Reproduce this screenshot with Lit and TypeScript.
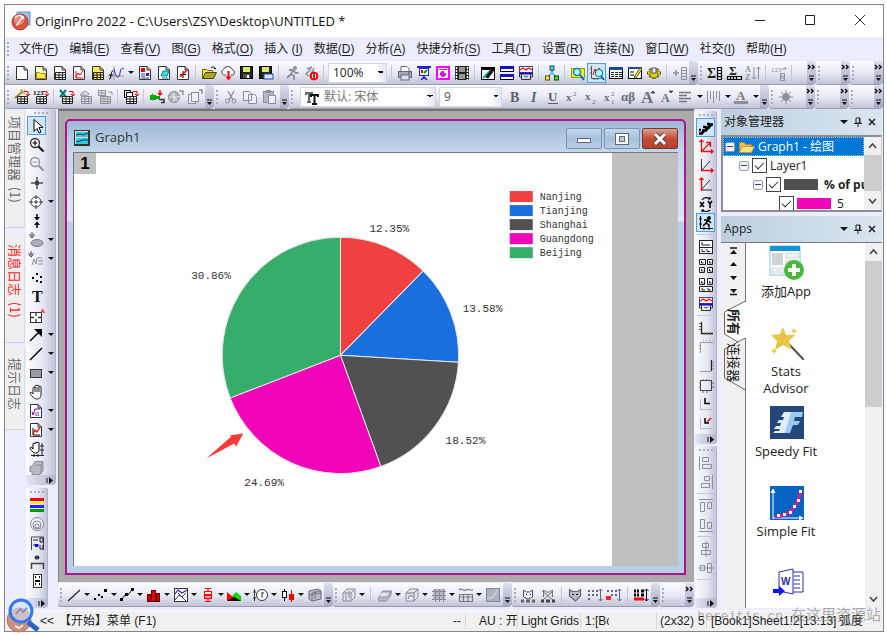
import { LitElement, html, svg, css, nothing } from "lit";
import { customElement, property } from "lit/decorators.js";
import { classMap } from "lit/directives/class-map.js";

/* ---------- icon drawing helpers (16 x 16 grid) ---------- */
const r = (x: number, y: number, w: number, h: number, f = "#000", s = "none") =>
  svg`<rect x=${x} y=${y} width=${w} height=${h} fill=${f} stroke=${s}></rect>`;
const p = (d: string, s = "#000", w = 1, f = "none") =>
  svg`<path d=${d} stroke=${s} stroke-width=${w} fill=${f}></path>`;
const c = (x: number, y: number, q: number, f = "none", s = "#000", w = 1) =>
  svg`<circle cx=${x} cy=${y} r=${q} fill=${f} stroke=${s} stroke-width=${w}></circle>`;
const t = (s: string, x: number, y: number, size: number, f = "#6d6f7c", extra = "") =>
  svg`<text x=${x} y=${y} font-size=${size} fill=${f} class=${"gl " + extra}>${s}</text>`;

const sheet = (f = "#fff") => p("M2.5 1.5h7.5l3.5 3.5v9.5h-11zM10 1.5v3.5h3.5", "#333", 1, f);
const table = (f: string, s = "#222") =>
  p("M3.5 7.5h10v7h-10zM3.5 10h10M3.5 12.500h10M7 7.500v7M10.500 7.500v7", s, 1, f);
const axes = (s = "#000") => p("M3.5 2v11.5H15", s);
const redArrow = p("M10 2.500h4v4M12 5l2 2 2-2", "#e00", 1);
const G = "#8b8e9b";
const K = "#000";
const R = "#f00";

const icons: Record<string, unknown> = {
  new: sheet(),
  folder: [sheet("#ffc"), p("M3.500 13.500v-6h3l1 1h5v5z", "#a80", 1, "#ffe94d")],
  book: [sheet(), table("#fff")],
  graph: [sheet(), p("M5 6v7h7", R), p("M5 12l2-4 2 2 3-4", R)],
  matrix: [sheet("#ffe94d"), table("#ffe94d")],
  func: [p("M0 11h16M6 1v14", "#999"), p("M6 4c2 10 5 10 6 4s2-5 4-4", "#22d"), p("M1 14c3 1 1-8 4-8M1 10h4", K)],
  report: [sheet(), r(4, 3, 4, 4, R), r(9, 8, 3, 3, "#22d"), p("M4 9h4M4 11h4M4 13h8", "#24a")],
  layout: [sheet(), p("M5 11l2-5h6l-2 5z", "#088", 1, "#4dd"), p("M6 13h6", "#088")],
  notes: [sheet(), p("M8 6v7M5 9.500h6", K), p("M5 12l7-7", R, 1.5)],
  open: [p("M1.500 13.500v-9h4l1 1h5v2", "#660", 1, "#ffe94d"), p("M1.500 13.500l3-6h11l-3 6z", "#440", 1, "#aa2"), p("M10 3c2-2 4-1 4 1l-1-1m1 1l1-1", K)],
  cloud: [p("M6 10H3.500a3 3 0 010-5.500 4.500 4.500 0 018.500 0 3 3 0 011 5.500H11", "#444", 1, "#fff"), p("M8.500 6v7", R, 2), p("M5.500 11.500h6l-3 4z", R, 0, R)],
  save: [r(1.5, 1.5, 12, 12, "#222", K), r(4, 2, 7, 5, "#dde86a"), r(4, 9, 7, 4, "#555"), r(8, 10, 2, 3, "#fff")],
  saveas: [r(1.5, 1.5, 12, 12, "#222", K), r(4, 2, 7, 5, "#dde86a"), r(6, 9, 9, 5, "#dfe8ff", "#24c")],
  run: [c(11, 3, 2, G, "none"), p("M9.500 5L7 9l3 2v4M7 9l-4 4M5 5l4.500 0 2 3h3", G, 1.800)],
  runstop: [p("M8 4l-5 5 3 2M11 3l-2 4 4 1M4 4l5-2", G, 1.5), c(11, 11, 4, "#e11", "#e11"), r(9, 9, 1, 4, "#fff"), r(12, 9, 1, 4, "#fff")],
  print: [p("M4 6V1.500h6l2 2V6", "#667", 1, "#fff"), r(1.5, 6.5, 13, 6, "#a7abb8", "#667"), r(4, 10, 8, 5, "#dfe3ee", "#667"), r(11, 7, 2, 2, "#58a")],
  present: [p("M1 2h14", "#22d", 2), r(3.5, 3.5, 9, 7, "#fff", "#22d"), r(5, 5, 2, 3, R), p("M8 8l3-3", "#090", 2), p("M8 10v3M5 15l3-3 3 3", "#22d", 1.5)],
  slide: [r(2, 2, 12, 12, "#fff"), p("M2 2h12v12h-12z", "#f0f", 2), r(4, 4, 8, 1, "#f0f"), c(8, 9, 2.5, "#f0f", "#b0b"), r(9, 6, 2, 2, "#fff")],
  film: [r(1, 1, 14, 14, "#222"), r(5, 2, 6, 5, "#999"), r(5, 9, 6, 5, "#999"), svg`<path d="M2.500 2v13M13.500 2v13" stroke="#fff" stroke-width="1.500" stroke-dasharray="2 1"></path>`],
  edit: [r(1.5, 2.5, 13, 12, "#fff", K), r(1, 2, 14, 3, K), p("M3 13l8-8", "#0aa", 2), p("M6 12l6-8 2 1-6 8z", K, 1, "#222")],
  split: [r(1.5, 1.5, 13, 5, "#fff", K), r(1, 1, 14, 3, "#11c"), r(1.5, 9.5, 13, 5, "#fff", K), r(1, 9, 14, 3, "#11c")],
  splitg: [r(1.5, 1.5, 13, 6, "#fff", "#448"), p("M2 5l3-2 3 2 3-2 3 2", R, 1.300), p("M1 8.500h14", "#11c", 2), p("M3.500 9v5.500h9V9M1.500 9v3h2M14.500 9v3h-2", "#333", 1), p("M6 11l2 1 2-1", "#555", 1)],
  tree: [p("M8 4v4M8 8L3.500 12M8 8l4.500 4", K), r(6, 1, 4, 4, "#4dd", "#065"), r(1.5, 11, 4, 4, "#ee4", "#550"), r(10.5, 11, 4, 4, "#4d4", "#050"), r(6, 7, 4, 3, "#6cf")],
  find: [r(1.5, 3.5, 13, 9, "#ee3", "#990"), c(7, 7, 3.500, "#bff", "#08a", 1.5), p("M10 10l4 5", "#06c", 2)],
  findg: [p("M2.500 1v12.500H12M1 4h2M1 8h2M5 13v2M8 13v2", "#555"), p("M4 10l2-6 2 7 2-8 2 4", R), c(10, 8, 3.500, "#bff", "#08a", 1.200), p("M12 11l3 4", "#06c", 2)],
  tbl: [r(1.5, 2.5, 13, 11, "#fff", K), r(1, 2, 14, 3, "#24a"), svg`<path d="M3 7.500h11M3 9.500h11M3 11.500h11" stroke="#222" stroke-dasharray="3 1"></path>`],
  tblpen: [r(1.5, 2.5, 13, 11, "#fff", K), r(1, 2, 14, 2, "#24a"), p("M3 7h4M3 10h4", K), p("M7 12l6-9 2 1-6 9z", "#550", 1, "#ee3")],
  gear: [p("M1 8h14M3.500 4l9 8M12.500 4l-9 8M8 3v11", "#550", 3), p("M2 8h12M4 5l8 6M12 5l-8 6M8 4v9", "#dc2", 2), c(8, 9, 4, "#dc2", "#880"), r(6, 3, 4, 5, "#eef", "#557")],
  addcol: [p("M1 8h6M4 5v6", G, 1.500), p("M9.500 2.500h5v12h-5zM9.500 5.500h5M9.500 8.500h5M9.500 11.500h5", G)],
  sumcol: [t("Σ", 0, 13, 14, "#222", "b"), p("M10.500 2.500h4v12h-4zM10.500 5.500h4M10.500 8.500h4M10.500 11.500h4", K, 1.200)],
  sumrow: [t("Σ", 3, 10, 12, "#222", "b"), p("M1.500 11.500h14v3h-14zM4.500 11v4M7.500 11v4M10.500 11v4", K, 1.200)],
  sort: [t("A", 0, 7, 8, G, "b"), t("Z", 0, 15, 8, G, "b"), p("M9 2v12M7 12l2 2 2-2M13.500 14V2M11.500 4l2-2 2 2", G)],
  num: [t("123", 0, 7, 7, G), p("M11 4h4l-1-2M9.500 8.500h4v7h-4zM9.500 11h4M9.500 13h4", G)],
  impwiz: [p("M1 9l7-6", "#982", 2), p("M8 0v5M6 1l5 4M11 1L6 5", "#a92"), table("#fff"), redArrow],
  imp123: [t("123", 0, 6, 7, K, "b"), table("#fff"), redArrow],
  impx: [p("M1 1l6 7M7 1L1 8", "#077", 2), table("#fff"), redArrow],
  impg1: [p("M4 3l3 3M2 6l5-4 4 3-4 2z", G), table("#ddd", G)],
  impg2: [r(1.5, 1.5, 7, 5, "#eee", G), p("M2 4h6M5 2v4M11 3h4v3", G), table("#ddd", G)],
  multi: [p("M1.500 1.500h6v7h-6z", K, 1, "#fff"), p("M3.500 3.500h6v7h-6z", K, 1, "#fff"), table("#fff"), redArrow],
  conn: [r(1, 6, 6, 5, "#0a0"), r(6, 7, 5, 3, "#0a0"), p("M11 1v5M9 4l2 2 2-2", R, 1.500), p("M10 10.500h5v3h-3", "#333", 1.500), p("M4 4l-3 4 3 4z", "#0a0", 0, "#0a0")],
  globe: [c(6, 8, 5.500, "#aaadb8", G), p("M1 8h11M3 4l6 8M6 3v10", "#eee"), p("M11 2h4v4", G, 1.5)],
  stack: [r(1.5, 5.5, 7, 9, "#eef", G), r(4.5, 3.5, 7, 9, "#eef", G), p("M12 1h3v4", G, 1.5)],
  cut: [p("M5 2l5 9M11 2l-5 9", G, 1.300), c(4.500, 12, 2, "none", G), c(11, 12, 2, "none", G)],
  copy: [p("M1.500 2.500h6l2 2v7h-8zM6.500 5.500h6l2 2v7h-8z", G, 1, "#eef")],
  paste: [r(2.5, 2.5, 10, 11, "#b5b8c4", G), r(5, 1, 5, 3, G), r(7.5, 6.5, 7, 8, "#eef", G)],
  bold: t("B", 3, 13, 14, "#5d5f70", "b"),
  ital: t("I", 5, 13, 14, "#5d5f70", "b i"),
  under: [t("U", 3, 12, 13, "#5d5f70", "b"), p("M3 14.500h10", "#5d5f70")],
  sup: [t("x", 2, 12, 11, "#6d6f7c", "b"), t("2", 9, 7, 7)],
  sub: [t("x", 2, 11, 11, "#6d6f7c", "b"), t("2", 9, 15, 7)],
  supsub: [t("x", 2, 12, 11, "#6d6f7c", "b"), t("2", 9, 7, 7), t("1", 9, 15, 7)],
  greek: t("αβ", 0, 12, 13, "#6d6f7c", "b"),
  bigA: [t("A", 1, 14, 17, "#6d6f7c", "b"), p("M11 4l2-2 2 2z", "#555", 1, "#555")],
  smallA: [t("A", 2, 13, 12, "#6d6f7c", "b"), p("M10 2l2 2 2-2z", "#555", 1, "#555")],
  align: p("M2 3.500h12M2 6.500h8M2 9.500h12M2 12.500h8", "#777", 1.500),
  vlines: p("M2.500 2v12M5.500 2v8M8.500 2v12M11.500 2v8M14.500 2v10", G),
  colorA: [t("A", 3, 11, 13, "#777", "b"), r(1, 12, 14, 3, G)],
  bulb: [c(8, 8, 3.500, G, G), p("M8 1v3M8 12v3M1 8h3M12 8h3M3 3l2 2M13 3l-2 2M3 13l2-2M13 13l-2-2", G)],

  pointer: p("M5 1.500v12l3-3 2 4.500 2-1-2-4.500h4z", K, 1, "#fff"),
  zoomin: [c(6, 6, 4.500, "#fff", "#333", 1.300), p("M3.500 6h5M6 3.500v5", K, 1.200), p("M9.500 9.500l5 5", K, 2)],
  zoomout: [c(6, 6, 4.500, "#f4f4f8", G, 1.300), p("M3.500 6h5", G), p("M9.500 9.500l5 5", G, 2)],
  cross: [p("M8 2v12M2 8h12", K), r(6, 6, 4, 4, "#444")],
  target: [c(8, 8, 5, "#fff", "#444"), p("M8 1v4M8 11v4M1 8h4M11 8h4M8 6v4M6 8h4", "#333")],
  updown: [p("M8 1v4M8 15v-4", K, 1.500), p("M5 4h6l-3 3.500zM5 12h6l-3-3.500z", K, 0, K)],
  mask: [svg`<ellipse cx="9" cy="11" rx="6" ry="3.500" fill="#a9adba" stroke="#777b88"></ellipse>`, p("M4 0v6M2 4l2 2 2-2M1 3h6", "#555")],
  maskw: [p("M3 0v6M1 4l2 2 2-2M0 3h6", "#555"), p("M4 14l2-6 2 5 1-6h5M10 10h5M10 13h5", G)],
  dots: [r(3, 7, 2, 2), r(7, 3, 2, 2), r(11, 6, 2, 2), r(7, 10, 2, 2), r(11, 11, 2, 2)],
  text: t("T", 3, 13, 16, "#111", "b"),
  annot: [r(1.5, 4.5, 11, 10, "#fff", "#333"), p("M7 5v3M7 11v3M2 9.500h3M9 9.500h3", "#333", 1.300), t("A", 11, 5, 7, R, "b")],
  arrow: [p("M2 14L11 5", K, 1.5), p("M6 2h8v8z", K, 0, K)],
  line: p("M2 14L14 2", K, 1.5),
  rect: r(2.5, 4.5, 11, 8, "#999ca6", "#333"),
  hand: p("M4 8V4c0-1 2-1 2 0V2c0-1 2-1 2 0V2c0-1 2-1 2 0v1c0-1 2-1 2 0v7c0 4-2 5-4 5s-4-1-7-6c0-1 2-1 3 1zM6 4v4M8 3v5M10 3v5", "#222", 1, "#fff"),
  sqrt: [sheet(), p("M4 9l1 3 2-6h5", "#80a", 1), t("α", 7, 13, 8, "#80a")],
  gobj: [sheet(), p("M5 6v7h7", K), p("M5 12l2-4 2 2 3-5", R, 1.3)],
  handx: [p("M4 7V3c0-1 2-1 2 0V2c0-1 2-1 2 0c0-1 2-1 2 0v6c0 3-1 4-3 4s-4-1-6-5c0-1 2-1 3 1z", K, 1, "#fff"), p("M2 14.500h13M5 13v3M9 13v3M13 2v13M11 5h4M11 9h4", "#222")],
  cube: p("M6 1.500h8v9l-3 4H3v-3H1v-5h2l3-5zM6 5h6M12 5v9M12 5l2-3", "#8a8f99", 1, "#b5bac3"),
  colors: [r(1, 1, 14, 3, R), r(1, 5, 14, 2, "#fe0"), r(1, 8, 14, 3, "#22f"), r(1, 12, 14, 3, "#090")],
  bubble: [c(8, 8, 6.500, "#f0f2f8", "#7f8594"), c(8, 9, 4, "none", "#7f8594"), c(8, 10, 2, "none", "#7f8594")],
  legend: [p("M2.500 15V2h12v13", "#444"), p("M4 5h5M11 3h3v4h-3zM11 10v4h3v-4", "#222"), p("M4 10h6", "#00f"), r(6, 9, 3, 3, "#00f")],
  xaxis: [p("M2.500 15V9.500h12V15", "#444", 1.500), p("M8 1v5M5.500 3.500h5M6 2l4 3M10 2L6 5", "#222")],
  scale: [r(4.5, 1.5, 8, 13, "#fff", "#333"), p("M6 4h1M10 4h1M6 8h5M6 11h1M10 11h1", K, 2)],

  layers: p("M1 13.500h4M4 10.500h5M7 7.500h5M10 4.500h5M4 13l2-2M8 10l2-2M11 7l2-2M1 10h2M5 7h3M9 4h3", K, 2.500),
  ax1: p("M3.500 1v11.500H15M1.500 3l2-2 2 2M13 10.500l2 2-2 2M4 12L12 4M8 3.500h4.500V8", "#e11", 1.300),
  ax2: [p("M3.500 1v11M4 12L12 3", "#333"), p("M3 12.500h12M13 10.500l2 2-2 2", "#e11", 1.500)],
  ax3: [p("M4 13h10M4 12L12 3", "#333"), p("M3.500 14V1M1.500 3l2-2 2 2", "#e11", 1.500)],
  xy: [p("M2 6l4 5M6 6l-4 5M10 5l2 3 2-3M12 8v4", K, 1.500), p("M4 4c2-3 6-3 8-1M12 1v2h-2M12 14c-2 2-6 2-8 0M4 16v-2h2", K, 1.200)],
  speed: [p("M2.500 1v12.500H15M1 4h3M1 9h3M6 12v3M11 12v3", K), c(11, 3, 1.500, K), p("M10 5L8 8l3 2v2M8 8l-3 3M6 5l4 0 3 3", K, 1.500)],
  lay1: [r(1.5, 1.5, 13, 13, "#fff", "#222"), p("M4 3v3h8M1 8.500h13M4 10v2.500h3M9 10v2.500h3", "#222")],
  lay4: p("M1.500 1.500h6v5h-6zM9.500 1.500h5v5h-5zM1.500 9.500h5v5h-5zM9.500 9.500h5v5h-5zM3.500 3v2h2M11.500 3v2h2M3.500 11v2h2M11.500 11v2h2", "#222", 1, "#fff"),
  lay5: p("M1.500 1.500h5v6h-5zM9.500 1.500h5v6h-5zM1.500 9.500h13v5h-13zM3.500 4v2h2M11.500 4v2h2M4 11v2h3M10 11v2h3", "#222", 1, "#fff"),
  corner: [p("M3.500 2v11.500H15", "#222", 1.300), p("M1 3.500h2M1 6.500h2M1 9.500h2M6.500 13v2M9.500 13v2M12.500 13v2", "#666", 1)],
  corner2: p("M2.500 14V3.500H15M5 1.500h1M8 1.500h1M11 1.500h1M1 6.500h1M1 9.500h1", "#999"),
  corner3: [p("M13.500 2v11", "#222", 1.300), p("M2 13.500h11M14 4.500h2M14 7.500h2M14 10.500h2", "#999")],
  box: [r(2.5, 3.5, 11, 10, "none", "#444"), p("M1 6h2M1 10h2M5 14v2M9 14v2M5 2v2M9 2v2M14 6h2M14 10h2", "#666")],
  in1: [p("M2.500 3v10.500H14", "#bbb"), p("M7 2v5.500h5", K, 1.500)],
  in2: [p("M2.500 3v10.500H14", "#bbb"), p("M7 3v5h4", K, 1.500), p("M9 7l4-4", R, 1.500)],
  al1: p("M1.500 1v14M4.500 2.500h6v4h-6zM4.500 9.500h9v4h-9z", G),
  al2: p("M14.500 1v14M6.500 2.500h5v4h-5zM3.500 9.500h8v4h-8z", G),
  al3: p("M1 1.500h14M2.500 4.500h4v9h-4zM9.500 4.500h4v6h-4z", G),
  al4: p("M1 14.500h14M2.500 2.500h4v9h-4zM9.500 5.500h4v6h-4z", G),
  al5: p("M8 0v16M4.500 2.500h6v4h-6zM3.500 9.500h9v4h-9z", G, 1),
  al6: p("M0 8h16M2.500 5.500h4v5h-4zM9.500 3.500h4v9h-4z", G),

  pl: p("M2 14L14 3", "#222", 1.200),
  ps: [r(1, 11, 2, 2), r(5, 7, 2, 2), r(8, 9, 2, 2), r(11, 2, 3, 3)],
  pls: [p("M2 13l5-6 2 1 4-5", K), r(1, 11, 3, 3), r(6, 6, 3, 3), r(12, 1, 3, 3)],
  bars: [r(1.5, 7.5, 3, 7, "#d00", "#600"), r(5.5, 3.5, 4, 11, "#e00", "#600"), r(10.5, 6.5, 3, 8, "#d00", "#600")],
  pic: [r(1.5, 1.5, 13, 13, "#fff", "#333"), p("M2 7l3-4 4 3 5-3", "#22d", 1.200), p("M2 13l4-5 3 2 4-4M5 6l8 8", "#338")],
  boxp: [p("M8 1v14M5 1.500h6M5 14.500h6", R, 1.200), r(4.5, 4.5, 7, 3, "#fff", R), r(4.5, 8.5, 7, 3, "#f88", R)],
  area: [p("M1 14V5l6 5 4-3 4 7z", R, 0, R), p("M6 9l4-4 5 4v5z", "#0d0", 0, "#0d0"), p("M1 14l7-4 7 4z", "#200", 0, "#200")],
  polar: [c(9, 8, 5.500, "#fff", "#333", 1), p("M1.500 2v12M0 5h3M0 11h3M9 5v6M9 6h2", "#333")],
  stock: [p("M4.500 2v12", K), r(2.5, 4.5, 4, 6, "#fff", K), p("M11.500 3v12", R), r(9.5, 7.5, 4, 5, R, R)],
  surf: [p("M2 4l9-2 3 2v8l-9 2-3-2z", "#667", 1, "#b9bdca"), p("M5 6l9-2M5 6v8M2 8l12-2M8 4v8", "#778")],
  c3: [p("M2 6l4-4h8v8l-4 4H2z", G, 1, "#dfe2ea"), p("M2 6h8v8M10 6l4-4M5 6v8M8 4v7", G)],
  c3b: [p("M1.500 11l4-7h9l-1 5-4 5h-8z", G, 1, "#b9bdc9"), p("M5 5h9l-4 5H2", G, 1, "#e4e6ee")],
  c3c: [p("M2 6l4-4h8v8l-4 4H2z", G, 1, "#e4e6ee"), p("M2 6h8v8M10 6l4-4M4 12l2-4 3 2", "#778")],
  heat: [r(2, 2, 12, 11, "#b4b8c4"), p("M1 4.500h14M1 8.500h14M1 12.500h14M4.500 2v13M8.500 2v13M12.500 2v13", "#858997")],
  wave: [p("M1 3c3-3 4 2 7 0s4 1 7 0M1.500 7.500h13v7h-13zM1 10h14M5.500 8v6M10 8v6", "#777b88", 1.200)],
  flat: [r(1.5, 1.5, 13, 13, "#aab2bd", "#7d8797"), p("M2 12c5 0 9-4 10-10", "#c4c9d2", 2)],
  cat1: [p("M3.500 10V3l3 2h3l3-2v7l-4 2z", "#555", 1, "#eef"), r(6, 7, 1, 1), r(10, 7, 1, 1), p("M1 14h3M6 14h4M12 14h3", "#666", 3)],
  cat2: [p("M3.500 10V3l3 2h3l3-2v7M2 4l11 9M13 4L3 13", "#777", 1, "#dde"), p("M1 14h3M6 14h4M12 14h3", "#444", 3)],
  cat3: [p("M2.500 9V2.500l3 2h5l3-2V9l-5 5z", "#667", 1.200, "#b9bdc9"), r(5, 7, 2, 1), r(9, 7, 2, 1)],
  arrg: [p("M1 4h2M5 4h2M9 4h2M1 8h2M5 8h2M9 8h2M1 12h2", "#667", 2), p("M13.500 2v12M11.500 4l2-2 2 2M11.500 12l2 2 2-2", "#667")],
  arrr: [p("M1 4h2M5 4h2M9 4h2M5 8h2M9 8h2", "#667", 2), r(0, 9, 5, 4, "#f22"), p("M13.500 2v12M11.500 4l2-2 2 2M11.500 12l2 2 2-2", "#667")],
  arrk: [p("M1 4h2M4 4h2M8 4h3M1 8h2M4 8h2M8 8h3", K, 3), p("M1 12h10", R, 3), p("M13.500 2v12M11.500 4l2-2 2 2M11.500 12l2 2 2-2", K)],
};

/* A dockable strip of tool buttons. "|" is a separator, a trailing "+" adds a
   drop-down arrow and a leading "*" marks the button as pressed. */
@customElement("tool-strip")
class ToolStrip extends LitElement {
  @property() items = "";
  @property() label = "";
  @property({ type: Boolean, reflect: true }) vertical = false;
  @property({ type: Boolean, reflect: true }) spread = false;
  @property({ type: Boolean }) more = false;

  static styles = css`
    :host {
      display: flex;
      align-items: center;
      box-sizing: border-box;
      height: 24px;
      min-width: 0;
      overflow: hidden;
      background: linear-gradient(#fbfbff, #e6e8f3 55%, #c2c4d8);
      border-bottom: 1px solid #9a9cb4;
      border-radius: 2px 4px 4px 2px;
    }
    .grip {
      flex: none;
      width: 2px;
      height: 14px;
      margin: 0 3px 0 2px;
      background: repeating-linear-gradient(#a9abc0 0 2px, transparent 2px 4px);
    }
    .row {
      display: flex;
      flex: 1;
      min-width: 0;
      align-items: center;
      overflow: hidden;
    }
    :host([spread]) .row {
      justify-content: space-between;
    }
    button {
      flex: none;
      display: flex;
      align-items: center;
      justify-content: center;
      box-sizing: border-box;
      height: 20px;
      min-width: 19px;
      padding: 0;
      border: 1px solid transparent;
      background: none;
    }
    button.dd {
      min-width: 28px;
    }
    :host([spread]) button.dd {
      min-width: 26px;
    }
    button.on {
      background: #cfe6f8;
      border-color: #4aa0e0;
    }
    svg {
      width: 16px;
      height: 16px;
      flex: none;
      overflow: visible;
    }
    .gl {
      font-family: "Liberation Serif", serif;
    }
    .b {
      font-weight: bold;
    }
    .i {
      font-style: italic;
    }
    .caret {
      width: 0;
      margin-left: 4px;
      border: 3px solid transparent;
      border-top-color: #111;
      border-bottom: 0;
    }
    :host([spread]) .caret {
      margin-left: 2px;
    }
    .sep {
      flex: none;
      width: 1px;
      height: 16px;
      margin: 0 3px;
      background: #c4c6d6;
    }
    .cap {
      flex: none;
      display: flex;
      flex-direction: column;
      justify-content: flex-end;
      align-items: center;
      gap: 1px;
      width: 9px;
      align-self: stretch;
      padding-bottom: 2px;
      box-sizing: border-box;
      background: linear-gradient(#dcdeec, #a9abc4);
    }
    .cap.more {
      justify-content: space-between;
      padding-top: 3px;
    }
    .cap svg {
      width: 7px;
      height: 7px;
    }
    :host([vertical]) {
      flex-direction: column;
      height: auto;
      width: 100%;
      background: linear-gradient(90deg, #fbfbff, #e6e8f3 55%, #c2c4d8);
      border-bottom: 0;
      border-right: 1px solid #b0b2c8;
      border-radius: 2px 2px 4px 4px;
    }
    :host([vertical]) .grip {
      width: 14px;
      height: 2px;
      margin: 3px 0 2px;
      background: repeating-linear-gradient(90deg, #a9abc0 0 2px, transparent 2px 4px);
    }
    :host([vertical]) .row {
      flex-direction: column;
      align-items: flex-start;
      width: 100%;
      padding-left: 1px;
      box-sizing: border-box;
    }
    :host([vertical]) button {
      height: 19px;
    }
    :host([vertical]) .sep {
      width: 16px;
      height: 1px;
      margin: 2px 1px;
    }
    :host([vertical]) .cap {
      width: 100%;
      height: 10px;
      flex-direction: row;
      align-items: center;
      padding: 0 2px;
      background: linear-gradient(90deg, #e4e6f2, #b4b6ce);
    }
  `;

  render() {
    const names = this.items.split(" ").filter(Boolean);
    return html`
      <span class="grip"></span>
      <div class="row" role="toolbar" aria-label=${this.label}>
        ${names.map((raw) => {
          if (raw === "|") return html`<span class="sep"></span>`;
          const on = raw.startsWith("*");
          const dd = raw.endsWith("+");
          const name = raw.replace(/[*+]/g, "");
          return html`<button class=${classMap({ on, dd })} aria-label=${name}>
            <svg viewBox="0 0 16 16">${icons[name]}</svg>${dd ? html`<span class="caret"></span>` : nothing}
          </button>`;
        })}
        <slot></slot>
      </div>
      <span class=${classMap({ cap: true, more: this.more })}>
        ${this.more ? html`<svg viewBox="0 0 7 7">${p("M0 1l2 2-2 2M4 1l2 2-2 2", "#111", 1.5)}</svg>` : nothing}
        ${this.vertical
          ? html`<svg viewBox="0 0 7 7">${p("M1 1v5", "#111")}${p("M3 0l4 3.500-4 3.500z", "#111", 0, "#111")}</svg>`
          : html`<svg viewBox="0 0 7 7">${p("M1 1h5", "#111")}${p("M1 3h5l-2.500 3z", "#111", 0, "#111")}</svg>`}
      </span>
    `;
  }
}

/* ---------- the pie chart ---------- */
const slices = [
  { name: "Nanjing", value: 12.35, color: "#f04040", x: 295, y: 79 },
  { name: "Tianjing", value: 13.58, color: "#1a6fdf", x: 388, y: 159 },
  { name: "Shanghai", value: 18.52, color: "#515151", x: 371, y: 291 },
  { name: "Guangdong", value: 24.69, color: "#f005b8", x: 170, y: 332 },
  { name: "Beijing", value: 30.86, color: "#37ad6b", x: 117, y: 126 },
];

@customElement("pie-page")
class PiePage extends LitElement {
  static styles = css`
    :host {
      display: block;
    }
    svg {
      display: block;
      width: 100%;
      height: 100%;
    }
    text {
      font-family: "Liberation Mono", monospace;
      font-size: 11px;
      fill: #333;
    }
    .key {
      font-size: 10px;
    }
  `;
  render() {
    const cx = 266;
    const cy = 202;
    const rad = 118;
    let acc = 0;
    const at = (v: number) => {
      const a = (v / 100) * 2 * Math.PI;
      return `${cx + rad * Math.sin(a)} ${cy - rad * Math.cos(a)}`;
    };
    return html`<svg viewBox="0 0 537 412" preserveAspectRatio="xMinYMin meet" role="img" aria-label="Pie chart">
      ${slices.map((s) => {
        const from = at(acc);
        acc += s.value;
        return svg`<path d=${`M${cx} ${cy}L${from}A${rad} ${rad} 0 0 1 ${at(acc)}Z`} fill=${s.color} stroke="#e6e6e6"></path>`;
      })}
      ${slices.map((s) => svg`<text x=${s.x} y=${s.y}>${s.value.toFixed(2)}%</text>`)}
      ${slices.map(
        (s, i) => svg`<rect x="435" y=${38 + i * 14} width="23" height="11" fill=${s.color}></rect>
          <text class="key" x="465" y=${47 + i * 14}>${s.name}</text>`
      )}
      <path d="M132 305L157 283L155 282L169 280L162 293L160 290Z" fill="#f93a36"></path>
    </svg>`;
  }
}

const menus: [string, string][] = [
  ["文件", "F"], ["编辑", "E"], ["查看", "V"], ["图", "G"], ["格式", "O"], ["插入 ", "I"], ["数据", "D"], ["分析", "A"],
  ["快捷分析", "S"], ["工具", "T"], ["设置", "R"], ["连接", "N"], ["窗口", "W"], ["社交", "I"], ["帮助", "H"],
];

const apps = [
  {
    label: "添加App",
    art: svg`<path d="M0 0h30v29H0z" fill="#fff" stroke="#7ec4ec"></path><path d="M0 0h30v5H0z" fill="#1492d4"></path>
      <path d="M2 7h11v12H2z" fill="#d0d3d6"></path><path d="M16 7h12v5H16zM16 14h12v5H16zM2 22h5v5H2zM9 22h5v5H9z" fill="#eef1f3" stroke="#d4d8db"></path>
      <circle cx="24" cy="24" r="10" fill="#48b83c"></circle><path d="M24 18v12M18 24h12" stroke="#fff" stroke-width="4"></path>`,
  },
  {
    label: "Stats Advisor",
    art: svg`<path d="M13 12l21 22" stroke="#4b4f58" stroke-width="2"></path>
      <path d="M13 1l3 8 9 0-6 6 3 9-9-5-8 5 2-9-6-6 9-1z" fill="#e8c545"></path>
      <path d="M24 2l1 2 2 1-2 1-1 2-1-2-2-1 2-1zM4 22l1 2 2 1-2 1-1 2-1-2-2-1 2-1z" fill="#f2c637"></path>`,
  },
  {
    label: "Speedy Fit",
    art: svg`<path d="M0 0h34v33H0z" fill="#254678"></path><path d="M14 6h10l-7 21H3l2-2h4l1-2H4l2-3h4l1-3H7l2-3h4l1-3h-3z" fill="#e3edf7"></path>
      <path d="M21 6h12l-1 5h-7l-1 4h6l-2 4h-5l-3 8h-5z" fill="#9ccbf2"></path>`,
  },
  {
    label: "Simple Fit",
    art: svg`<path d="M0 0h34v34H0z" fill="#0764c4"></path><path d="M3 33V5M1 7l2-4 2 4M3 32h28M29 30l4 2-4 2" stroke="#fff" fill="#fff"></path>
      <path d="M5 31c15-2 22-8 26-27" stroke="#e8128c" stroke-width="3" fill="none"></path>
      <path d="M7 28h3v3H7zM13 27h3v3h-3zM19 25h3v3h-3zM23 19h3v3h-3zM27 13h3v3h-3zM29 4h3v3h-3z" fill="#fff"></path>`,
  },
  {
    label: "",
    art: svg`<path d="M22 6h11v20H22" fill="#fff" stroke="#2a2fa0"></path><path d="M24 10h6M24 14h6M24 18h6M24 22h6" stroke="#2a2fa0"></path>
      <path d="M9 6l14-3v25L9 25z" fill="#fff" stroke="#2a2fa0"></path>
      <text x="11" y="19" font-size="10" font-weight="bold" fill="#2a2fa0" font-family="Liberation Sans, sans-serif">W</text>
      <path d="M3 23h6v-3l6 5-6 5v-3H3z" fill="#11f"></path>`,
  },
];

@customElement("app-root")
class AppRoot extends LitElement {
  static styles = css`
    :host {
      display: block;
      position: relative;
      box-sizing: border-box;
      height: 100vh;
      padding: 4px 3px 3px 4px;
      background: #fff;
      color: #222;
      font: 12px/16px "Open Sans", "Noto Sans CJK SC", sans-serif;
    }
    * {
      box-sizing: border-box;
    }
    button,
    select,
    input {
      font: inherit;
      color: inherit;
      margin: 0;
    }
    .frame {
      display: flex;
      flex-direction: column;
      height: 100%;
      border: 1px solid #858585;
      background: #ebedfc;
    }
    .title {
      display: flex;
      align-items: center;
      height: 32px;
      flex: none;
      padding-left: 6px;
      gap: 4px;
      background: #fff;
      font-size: 13px;
      color: #111;
    }
    .title h1 {
      flex: 1;
      margin: 0;
      font: inherit;
    }
    .title button {
      width: 46px;
      padding: 0;
      border: 0;
      background: none;
    }
    .title button svg {
      width: 12px;
      height: 12px;
    }
    .logo {
      width: 20px;
      height: 20px;
    }
    .menu {
      display: flex;
      flex: none;
      height: 24px;
      align-items: center;
      padding-left: 2px;
      background: #ebedfc;
    }
    .menu .grip {
      width: 2px;
      height: 14px;
      margin-right: 10px;
      background: repeating-linear-gradient(#a9abc0 0 2px, transparent 2px 4px);
    }
    .menu .names {
      display: flex;
      gap: 11px;
    }
    .menu button {
      padding: 0;
      border: 0;
      background: none;
      white-space: pre;
      font-family: "Liberation Sans", "Noto Sans CJK SC", sans-serif;
    }
    .menu u {
      text-underline-offset: 2px;
    }
    .bars {
      display: flex;
      height: 24px;
      flex: none;
    }
    .tail {
      flex: 1;
    }
    .wide1 {
      width: 693px;
    }
    .three {
      width: 118px;
    }
    .import {
      width: 209px;
    }
    .clip {
      width: 75px;
    }
    .format {
      width: 480px;
    }
    .mask {
      width: 46px;
    }
    .combo {
      appearance: none;
      height: 20px;
      border: 1px solid #d4d6e2;
      border-radius: 0;
      padding: 0 12px 0 4px;
      background:
        linear-gradient(45deg, transparent 50%, #111 50%) right 5px center / 3px 3px no-repeat,
        linear-gradient(-45deg, transparent 50%, #111 50%) right 2px center / 3px 3px no-repeat,
        linear-gradient(90deg, transparent, #e3e5f0) right / 10px 100% no-repeat,
        #fff;
      outline: 0;
    }
    .zoom {
      width: 63px;
      margin: 0 1px;
      font-size: 12px;
    }
    .face {
      position: relative;
      display: flex;
      flex: none;
      margin-left: 4px;
    }
    .face svg {
      position: absolute;
      left: 5px;
      top: 3px;
      width: 15px;
      height: 15px;
    }
    .face .combo {
      width: 136px;
      padding-left: 23px;
      color: #777;
    }
    .size {
      width: 63px;
      margin: 0 3px;
      flex: none;
      color: #555;
    }
    .work {
      display: grid;
      flex: 1;
      min-height: 0;
      grid-template-columns: 21px 32px minmax(0, 1fr) 26px 163px;
    }
    .tabs {
      display: flex;
      flex-direction: column;
      gap: 6px;
      padding-top: 2px;
    }
    .tabs button {
      writing-mode: vertical-rl;
      text-orientation: sideways;
      width: 20px;
      padding: 5px 0 24px;
      border: 0;
      border-right: 1px solid #dcdce6;
      border-bottom: 1px solid #d0d0da;
      background: #efefef;
      color: #6b6b6b;
      text-align: left;
      font: 13px/16px "Noto Sans CJK SC", sans-serif;
      white-space: pre;
    }
    .tabs .alert {
      color: #f22;
      padding: 10px 0 24px;
    }
    .tabs .last {
      padding: 9px 0 19px;
    }
    .tools {
      display: flex;
      flex-direction: column;
      align-items: flex-start;
      justify-content: space-between;
      padding-bottom: 2px;
      min-height: 0;
    }
    .tools .slim {
      width: 22px;
      height: 120px;
    }
    .tools .broad {
      width: 30px;
      height: 376px;
    }
    .mid {
      display: flex;
      flex-direction: column;
      min-width: 0;
    }
    .desk {
      flex: 1;
      min-height: 0;
      padding: 8px 8px 7px 6px;
      background: #ababab;
      border-top: 2px solid #747474;
      border-left: 1px solid #858585;
    }
    .graph {
      display: flex;
      flex-direction: column;
      height: 100%;
      border: 2px solid #b0148c;
      border-radius: 5px 5px 0 0;
      background: linear-gradient(#9db7d4, #c3d6ea 30px, #dbe8f5 100px, #bad0e8 101px);
      padding: 0 6px 7px;
    }
    .graph header {
      display: flex;
      align-items: center;
      height: 31px;
      flex: none;
      gap: 2px;
      font-size: 13px;
      color: #333;
    }
    .graph h2 {
      flex: 1;
      margin: 0 0 0 2px;
      font: inherit;
    }
    .graph header button {
      display: flex;
      align-items: center;
      justify-content: center;
      width: 36px;
      height: 21px;
      margin-top: 4px;
      padding: 0;
      border: 1px solid #7c93b0;
      border-radius: 2px;
      background: linear-gradient(#c8d9ec, #a5bfdc 50%, #b7cee6);
    }
    .graph header button.close {
      background: linear-gradient(#dfa08f, #c24c35 50%, #b8402a);
      border-color: #6f3a3a;
    }
    .graph header svg {
      width: 16px;
      height: 14px;
    }
    .graph header .gico {
      width: 18px;
      height: 18px;
      margin-top: 2px;
    }
    .canvas {
      display: flex;
      flex: 1;
      min-height: 0;
      position: relative;
      border-top: 1px solid #777;
      border-left: 1px solid #777;
      background: #fff;
    }
    .canvas pie-page {
      flex: 537;
      min-width: 0;
    }
    .off {
      flex: 66;
      background: #c0c0c0;
    }
    .num {
      position: absolute;
      left: 0;
      top: 0;
      width: 22px;
      height: 21px;
      background: #c0c0c0;
      color: #000;
      text-align: center;
      font: bold 17px/22px "Liberation Sans", sans-serif;
    }
    .dock {
      display: flex;
      height: 28px;
      flex: none;
      padding: 1px 0 2px;
    }
    .dock .a {
      flex: 275;
    }
    .dock .b {
      flex: 178;
    }
    .dock .c {
      flex: 148;
    }
    .dock .d {
      flex: 34;
    }
    .rtools {
      display: flex;
      flex-direction: column;
      gap: 2px;
      padding: 2px 3px 2px 1px;
      min-height: 0;
    }
    .rtools .top {
      height: 333px;
      flex: none;
    }
    .rtools .low {
      flex: 1;
    }
    .side {
      display: flex;
      flex-direction: column;
      min-width: 0;
      min-height: 0;
      padding: 0 1px;
    }
    .side .head {
      display: flex;
      align-items: center;
      height: 26px;
      flex: none;
      padding: 0 3px;
      background: linear-gradient(90deg, #bccfdf, #dbe5f0);
    }
    .side h3 {
      flex: 1;
      margin: 0;
      font: inherit;
    }
    .head button {
      width: 14px;
      height: 14px;
      padding: 0;
      border: 0;
      background: none;
    }
    .head svg {
      width: 10px;
      height: 10px;
      display: block;
      margin: auto;
    }
    .tree {
      display: flex;
      height: 77px;
      flex: none;
      margin-bottom: 4px;
      border: 2px solid #8c8c8c;
      border-right: 1px solid #ccc;
      background: #fff;
      overflow: hidden;
    }
    .tree ul {
      flex: 1;
      min-width: 0;
      margin: 0;
      padding: 0;
      list-style: none;
      overflow: hidden;
    }
    .tree li {
      display: flex;
      align-items: center;
      gap: 3px;
      height: 19px;
      padding-left: 2px;
      white-space: nowrap;
    }
    .tree .sel {
      background: #0078d7;
      color: #fff;
      outline: 1px dotted #9cf;
      outline-offset: -1px;
    }
    .tree .l2 {
      padding-left: 16px;
    }
    .tree .l3 {
      padding-left: 30px;
      font-weight: bold;
    }
    .tree .l4 {
      padding-left: 56px;
    }
    .pm {
      width: 10px;
      height: 10px;
      flex: none;
      padding: 0;
      border: 1px solid #9a9a9a;
      border-radius: 2px;
      background: linear-gradient(#24a, #24a) center / 6px 1px no-repeat, #f4f6fa;
    }
    .tree input {
      appearance: none;
      width: 15px;
      height: 15px;
      flex: none;
      border: 1px solid #444;
      background: #fff;
      display: grid;
      place-items: center;
    }
    .tree input:checked::after {
      content: "";
      width: 8px;
      height: 4px;
      margin-bottom: 3px;
      border: solid #333;
      border-width: 0 0 1px 1px;
      transform: rotate(-45deg);
    }
    .sw {
      width: 34px;
      height: 11px;
      flex: none;
      margin-right: 3px;
      background: #515151;
    }
    .sw.pink {
      background: #f005b8;
    }
    .scroll {
      display: flex;
      flex-direction: column;
      align-items: center;
      width: 17px;
      flex: none;
      background: #f0f0f0;
    }
    .scroll svg {
      width: 9px;
      height: 18px;
      flex: none;
    }
    .scroll i {
      width: 100%;
      background: #cdcdcd;
      height: 36px;
    }
    .scroll .long {
      height: 146px;
    }
    .scroll b {
      flex: 1;
    }
    .apps {
      display: flex;
      flex: 1;
      min-height: 0;
      margin-bottom: 2px;
      border-top: 1px solid #777;
      background: #fff;
      overflow: hidden;
    }
    .cats {
      width: 25px;
      flex: none;
      display: flex;
      flex-direction: column;
      align-items: center;
      background: linear-gradient(#777, #777) right / 1px 100% no-repeat, #f0f0f0;
      position: relative;
    }
    .cats > svg {
      width: 25px;
      height: 156px;
      flex: none;
    }
    .cats .names {
      position: absolute;
      top: 66px;
      left: 5px;
      display: flex;
      flex-direction: column;
      gap: 8px;
    }
    .cats button {
      writing-mode: vertical-rl;
      text-orientation: sideways;
      width: 17px;
      padding: 0;
      border: 0;
      background: none;
      font: 13px/17px "Noto Sans CJK SC", sans-serif;
    }
    .cats .now {
      font-weight: bold;
    }
    .list {
      flex: 1;
      min-width: 0;
      margin: 0;
      padding: 2px 0 0;
      list-style: none;
      overflow: hidden;
    }
    .list li {
      width: 80px;
      height: 80px;
    }
    .list button {
      display: flex;
      flex-direction: column;
      align-items: center;
      gap: 3px;
      width: 100%;
      padding: 0 4px;
      border: 0;
      background: none;
      font-size: 13px;
      line-height: 17px;
    }
    .list svg {
      width: 35px;
      height: 35px;
      flex: none;
    }
    .status {
      display: flex;
      align-items: center;
      height: 21px;
      flex: none;
      padding-left: 35px;
      background: #f0f0f0;
      border-top: 1px solid #fafafa;
      white-space: nowrap;
      overflow: hidden;
      font-family: "Liberation Sans", "Noto Sans CJK SC", sans-serif;
    }
    .status span {
      padding: 0 4px;
      border-right: 1px solid #d9d9d9;
      overflow: hidden;
      flex: none;
    }
    .status .open {
      border: 0;
      padding: 0 5px 0 0;
    }
    .status .start {
      flex: 1;
      border: 0;
      padding: 0;
    }
    .status .gapcell {
      width: 9px;
      padding: 0;
    }
    .status .au {
      width: 43px;
      padding-right: 0;
    }
    .status .theme {
      width: 63px;
      padding: 0 0 0 3px;
    }
    .status .book {
      width: 76px;
    }
    .status .book q {
      quotes: none;
      display: block;
      width: 24px;
      overflow: hidden;
    }
    .status .dim {
      width: 38px;
      padding: 0 0 0 3px;
      border: 0;
    }
    .status .five {
      width: 12px;
      padding: 0 0 0 3px;
    }
    .status .sheet {
      width: 130px;
      padding: 0 0 0 4px;
      border: 0;
    }
    .status .rad {
      padding: 0 20px 0 2px;
      border: 0;
    }
    .mark {
      position: absolute;
      right: 6px;
      bottom: 8px;
      color: rgba(110, 110, 110, 0.55);
      font: 13px/20px "Liberation Mono", "Noto Sans CJK SC", monospace;
      white-space: nowrap;
      pointer-events: none;
    }
    .mark b {
      font-weight: normal;
      font-size: 15px;
    }
    .lens {
      position: absolute;
      left: 5px;
      bottom: 1px;
      width: 36px;
      height: 38px;
    }
  `;

  private head(name: string) {
    return html`<div class="head">
      <h3>${name}</h3>
      <button aria-label="菜单"><svg viewBox="0 0 10 10">${p("M1 3h8l-4 4z", "#111", 0, "#111")}</svg></button>
      <button aria-label="固定"><svg viewBox="0 0 10 10">${p("M3 1h4v5H3zM1 6.500h8M5 7v3M6.500 1v5", "#222")}</svg></button>
      <button aria-label="关闭"><svg viewBox="0 0 10 10">${p("M2 2l6 6M8 2l-6 6", "#222", 1.500)}</svg></button>
    </div>`;
  }

  private chevron(up: boolean) {
    return html`<svg viewBox="0 0 9 18">${p(up ? "M1 11l3.500-4 3.500 4" : "M1 7l3.500 4 3.500-4", "#444", 1.500)}</svg>`;
  }

  render() {
    return html`
      <div class="frame">
        <div class="title">
          <svg class="logo" viewBox="0 0 20 20">
            ${r(6, 1, 13, 13, "#9cbfe8", "#6b95cc")}${c(9, 11, 8, "#d8543f", "#b53a2b")}${c(8, 9, 5, "#e88a78", "none")}
            ${p("M5 14c3 1 3-7 8-8M4 7c3-4 8-3 9 1", "#fff", 1.300)}
          </svg>
          <h1>OriginPro 2022 - C:\\Users\\ZSY\\Desktop\\UNTITLED *</h1>
          <button aria-label="最小化"><svg viewBox="0 0 12 12">${p("M1 6.500h10", "#222")}</svg></button>
          <button aria-label="最大化"><svg viewBox="0 0 12 12">${p("M1.500 1.500h9v9h-9z", "#222")}</svg></button>
          <button aria-label="关闭"><svg viewBox="0 0 12 12">${p("M1 1l10 10M11 1L1 11", "#222")}</svg></button>
        </div>
        <nav class="menu">
          <span class="grip"></span>
          <div class="names">${menus.map(([n, k]) => html`<button>${n}(<u>${k}</u>)</button>`)}</div>
        </nav>
        <div class="bars">
          <tool-strip class="wide1" label="标准" items="new folder book graph matrix func+ report layout notes | open cloud save saveas | run runstop |">
            <select class="combo zoom" aria-label="缩放"><option>100%</option></select>
            <tool-buttons items="| print present slide film | edit split splitg | tree | find *findg tbl tblpen gear | addcol"></tool-buttons>
          </tool-strip>
          <tool-strip class="three" label="列" more items="sumcol sumrow sort | num |"></tool-strip>
          <tool-strip class="tail" more></tool-strip>
          <tool-strip class="tail" more></tool-strip>
        </div>
        <div class="bars">
          <tool-strip class="import" label="导入" items="impwiz imp123 | impx impg1 impg2 | multi | conn globe stack"></tool-strip>
          <tool-strip class="clip" label="编辑" items="cut copy paste"></tool-strip>
          <tool-strip class="format" label="格式">
            <span class="face">
              <select class="combo" aria-label="字体"><option>默认: 宋体</option></select>
              <svg viewBox="0 0 15 15">${p("M0 3h8M4 3v9M2 12h4M1 2v3M7 2v3", "#666", 2)}${p("M5 5h9M9.500 5v9M7 14h5M6 4v3M13 4v3", "#111", 2)}</svg>
            </span>
            <select class="combo size" aria-label="字号"><option>9</option></select>
            <tool-buttons items="bold ital under sup sub supsub greek bigA smallA align+ vlines+ colorA+"></tool-buttons>
          </tool-strip>
          <tool-strip class="mask" label="屏蔽" more items="bulb"></tool-strip>
          <tool-strip class="tail" more></tool-strip>
          <tool-strip class="tail" more></tool-strip>
        </div>
        <div class="work">
          <div class="tabs">
            <button>项目管理器  (1)</button>
            <button class="alert">消息日志  (1)</button>
            <button class="last">提示日志</button>
          </div>
          <div class="tools">
            <tool-strip vertical class="broad" label="工具"
              items="*pointer zoomin zoomout cross target+ updown mask+ maskw+ dots text annot arrow+ line+ rect+ hand sqrt+ gobj+ handx cube"></tool-strip>
            <tool-strip vertical class="slim" label="图形" items="colors bubble legend xaxis scale"></tool-strip>
          </div>
          <div class="mid">
            <main class="desk">
              <section class="graph">
                <header>
                  <svg class="gico" viewBox="0 0 18 18">
                    ${r(1, 1, 16, 16, "#333")}${r(2, 2, 13, 13, "#e8d5d5")}${r(3, 3, 12, 5, "#3cc")}${r(3, 9, 12, 6, "#3cc")}
                    ${p("M3 6l4-1 3 1 5-2", "#22a")}${p("M3 13l4-1 3-1 5 0", "#22a")}
                  </svg>
                  <h2>Graph1</h2>
                  <button aria-label="最小化"><svg viewBox="0 0 16 14">${r(1.5, 6.5, 13, 4, "#fff", "#667")}</svg></button>
                  <button aria-label="还原"><svg viewBox="0 0 16 14">${r(1.5, 1.5, 13, 11, "#fff", "#667")}${r(5.5, 4.5, 5, 5, "#b7cee6", "#667")}</svg></button>
                  <button class="close" aria-label="关闭">
                    <svg viewBox="0 0 16 14">${p("M3 2l10 10M13 2L3 12", "#5a4040", 5)}${p("M3 2l10 10M13 2L3 12", "#fff", 3)}</svg>
                  </button>
                </header>
                <div class="canvas">
                  <pie-page></pie-page>
                  <div class="off"></div>
                  <div class="num">1</div>
                </div>
              </section>
            </main>
            <div class="dock">
              <tool-strip spread class="a" label="二维图" items="pl+ ps+ pls+ bars+ pic+ boxp+ area+ polar+ stock+ surf"></tool-strip>
              <tool-strip spread class="b" label="三维图" items="c3+ | c3b+ c3c+ heat+ wave+ flat"></tool-strip>
              <tool-strip spread class="c" label="屏蔽数据" items="cat1 cat2 | cat3 arrg arrr | arrk"></tool-strip>
              <tool-strip class="d" more></tool-strip>
            </div>
          </div>
          <div class="rtools">
            <tool-strip vertical class="top" label="图层"
              items="*layers ax1 ax2 ax3 xy *speed | lay1 lay4 lay5 splitg | corner corner2 corner3 box in1 in2"></tool-strip>
            <tool-strip vertical class="low" label="对齐" items="al1 al2 | al3 al4 | al5 al6 |"></tool-strip>
          </div>
          <aside class="side">
            ${this.head("对象管理器")}
            <div class="tree">
              <ul>
                <li class="sel">
                  <button class="pm" aria-label="折叠"></button>
                  <svg width="17" height="14" viewBox="0 0 17 14">${p("M1.500 12.500v-10h5l1 2h6v8z", "#b8862a", 1, "#f0c04c")}${p("M1.500 12.500l3-6h12l-3 6z", "#c8963a", 1, "#fbe08c")}</svg>
                  <span>Graph1 - 绘图</span>
                </li>
                <li class="l2"><button class="pm" aria-label="折叠"></button><input type="checkbox" id="ly" checked /><label for="ly">Layer1</label></li>
                <li class="l3">
                  <button class="pm" aria-label="折叠"></button><input type="checkbox" id="pu" checked /><span class="sw"></span><label for="pu">% of pu</label>
                </li>
                <li class="l4"><input type="checkbox" id="p5" checked /><span class="sw pink"></span><label for="p5">5</label></li>
              </ul>
              <div class="scroll">${this.chevron(true)}<i></i><b></b>${this.chevron(false)}</div>
            </div>
            ${this.head("Apps")}
            <div class="apps">
              <div class="cats">
                <svg viewBox="0 0 25 156">
                  ${p("M9 5h7M9 51.500h7", "#111", 1.500)}${p("M9 11h7l-3.500-4zM9 23h7l-3.500-4zM9 33h7l-3.500 4zM9 46h7l-3.500 4z", "#111", 0, "#111")}
                  ${p("M24.500 58L3.500 69v22L17 99l7.500-4z", "#666", 1, "#fff")}${r(24, 59, 1, 36, "#fff")}
                  ${p("M17 99L3.500 106v29l21 12", "#666")}
                </svg>
                <div class="names"><button class="now">所有</button><button>连接器</button></div>
              </div>
              <ul class="list">
                ${apps.map((a) => html`<li><button aria-label=${a.label || "Word"}><svg viewBox="-1 -1 35 35">${a.art}</svg>${a.label}</button></li>`)}
              </ul>
              <div class="scroll">${this.chevron(true)}<i class="long"></i><b></b>${this.chevron(false)}</div>
            </div>
          </aside>
        </div>
        <footer class="status">
          <span class="open">&lt;&lt;</span><span class="start">【开始】菜单 (F1)</span><span>--</span><span class="gapcell"></span>
          <span class="au">AU : 开</span><span class="theme">Light Grids</span><span class="book"><q>1:[Book1]</q></span>
          <span class="dim">(2x32)</span><span class="five">5</span><span class="sheet">[Book1]Sheet1!2[13:13]</span><span class="rad">弧度</span>
        </footer>
      </div>
      <div class="mark">hereitis.cn <b>在这里资源站</b></div>
      <svg class="lens" viewBox="0 0 36 38">
        ${c(14, 24, 12, "#cf8f7e", "#b87868")}${p("M23 26l10 8", "#2a62c8", 5)}
        ${svg`<circle cx="16" cy="15" r="11" fill="#cfe0f8" fill-opacity="0.600" stroke="#2f7af0" stroke-width="3"></circle>`}
        ${p("M11 18l4-5 3 3 4-4", "#8b90c8", 2)}${p("M10 30l4 2 4-3", "#fff", 1.500)}
      </svg>
    `;
  }
}

/* Extra buttons placed after a combo box inside a strip. */
@customElement("tool-buttons")
class ToolButtons extends ToolStrip {
  static styles = [
    ToolStrip.styles,
    css`
      :host {
        background: none;
        border: 0;
        flex: none;
      }
      .grip,
      .cap {
        display: none;
      }
    `,
  ];
}
